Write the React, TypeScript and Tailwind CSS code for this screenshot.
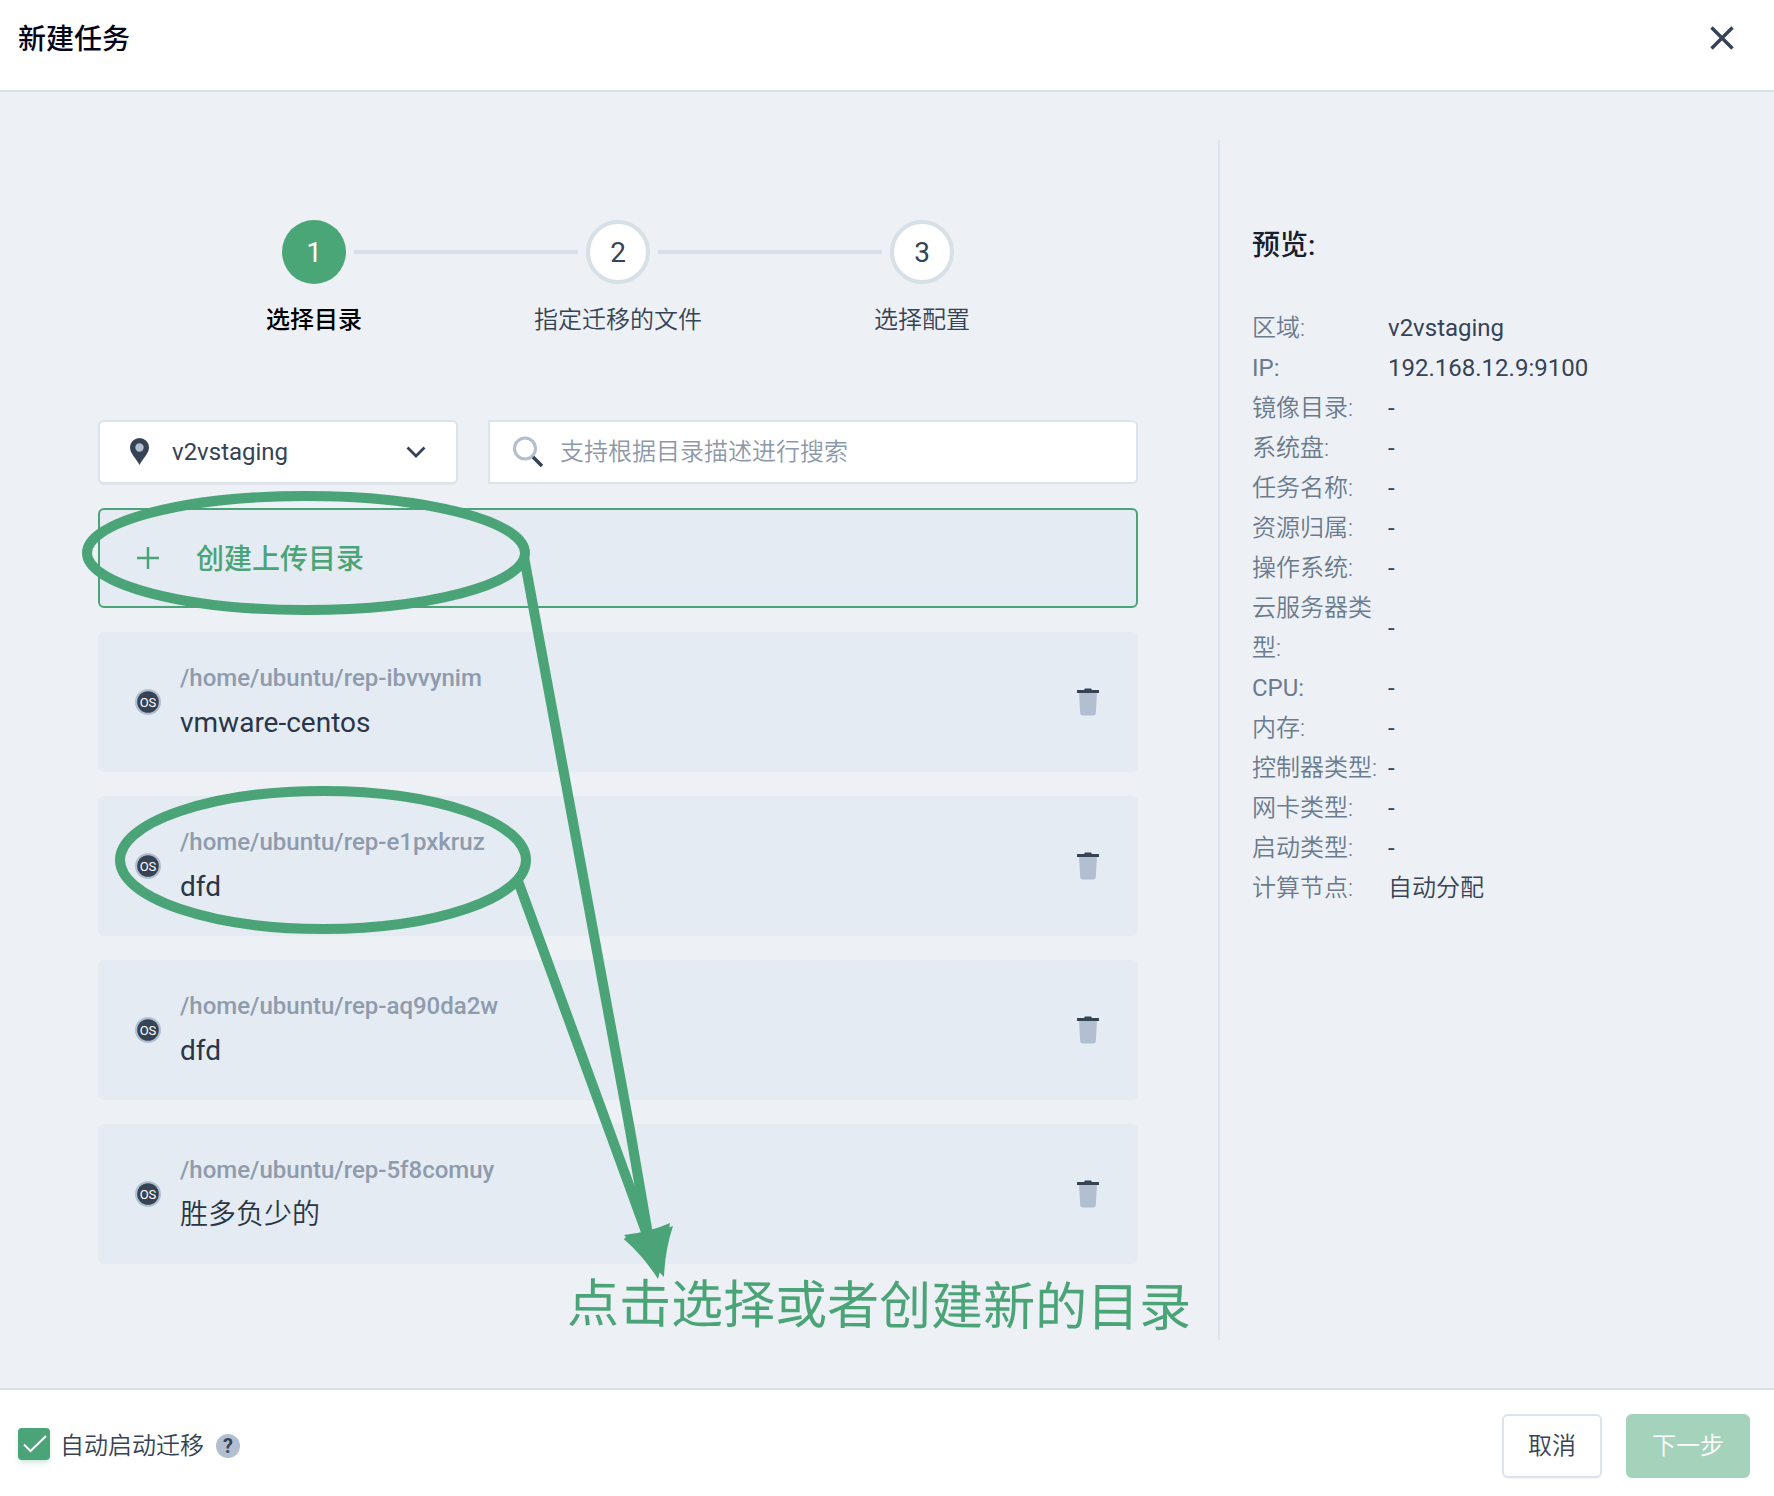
import { useState } from "react";

const steps = ["选择目录", "指定迁移的文件", "选择配置"];

const directories = [
  { path: "/home/ubuntu/rep-ibvvynim", name: "vmware-centos" },
  { path: "/home/ubuntu/rep-e1pxkruz", name: "dfd" },
  { path: "/home/ubuntu/rep-aq90da2w", name: "dfd" },
  { path: "/home/ubuntu/rep-5f8comuy", name: "胜多负少的" },
];

const preview = [
  ["区域:", "v2vstaging"],
  ["IP:", "192.168.12.9:9100"],
  ["镜像目录:", "-"],
  ["系统盘:", "-"],
  ["任务名称:", "-"],
  ["资源归属:", "-"],
  ["操作系统:", "-"],
  ["云服务器类型:", "-"],
  ["CPU:", "-"],
  ["内存:", "-"],
  ["控制器类型:", "-"],
  ["网卡类型:", "-"],
  ["启动类型:", "-"],
  ["计算节点:", "自动分配"],
];

// Chinese glyphs look heavier than Latin ones at the same weight, so they are set a step lighter.
function Balanced({ text }: { text: string }) {
  return <span className={/[\u4e00-\u9fff]/.test(text) ? "font-[350]" : "font-normal"}>{text}</span>;
}

function Stepper() {
  return (
    <ol className="flex justify-center">
      {steps.map((label, i) => (
        <li key={label} className="relative flex w-[304px] flex-col items-center">
          {i > 0 && <span className="absolute top-[30px] right-[192px] h-1 w-[224px] bg-[#d7dfe7]" />}
          <span
            className={
              i === 0
                ? "flex size-16 items-center justify-center rounded-full bg-[#4ba677] pt-0.5 text-[28px] text-white"
                : "flex size-16 items-center justify-center rounded-full border-4 border-[#d7dfe7] bg-white pt-0.5 text-[28px]"
            }
          >
            {i + 1}
          </span>
          <span className={i === 0 ? "mt-4 text-2xl leading-10 font-medium text-black" : "mt-4 text-2xl leading-10 font-[350]"}>
            {label}
          </span>
        </li>
      ))}
    </ol>
  );
}

function OsIcon() {
  return (
    <svg className="size-[26px] shrink-0" viewBox="0 0 26 26" aria-hidden="true">
      <circle cx="13" cy="13" r="13" fill="#b1bfd0" />
      <circle cx="13" cy="13" r="10.8" fill="#364355" />
      <text x="13" y="17.5" textAnchor="middle" fontSize="13" fill="#fff">
        OS
      </text>
    </svg>
  );
}

function TrashIcon() {
  return (
    <svg className="h-7 w-[22px]" viewBox="0 0 22 28" aria-hidden="true">
      <path d="M2 4h18l-1.2 21.2a2.5 2.5 0 0 1-2.5 2.3H5.7a2.5 2.5 0 0 1-2.5-2.3z" fill="#b1bfd0" />
      <path d="M0 2h7l1-1.600h6L15 2h7v3H0z" fill="#364355" />
    </svg>
  );
}

function Annotation() {
  return (
    <div className="pointer-events-none absolute top-0 left-0">
      <svg width="1200" height="1296" viewBox="0 92 1200 1296" fill="none" aria-hidden="true">
        <g stroke="#4ba477" strokeWidth="10">
          <ellipse cx="306" cy="553" rx="219" ry="57" />
          <ellipse cx="323" cy="860" rx="203" ry="69" />
          <path d="M524 557L630 1130L649 1240M518 881L609 1130L649 1240" />
        </g>
        <path d="M624 1239Q652 1234 673 1226Q665 1250 664 1277Q650 1262 624 1239z" fill="#4ba477" />
        <path d="M624 1235Q650 1232 670 1223Q666 1250 658 1279Q644 1257 624 1239L626 1237z" fill="#4ba477" />
      </svg>
      <p className="absolute top-[1177px] left-[567px] rotate-[0.4deg] text-[52px] leading-[76px] whitespace-nowrap text-[#4ba477]">
        点击选择或者创建新的目录
      </p>
    </div>
  );
}

export default function App() {
  const [autoStart, setAutoStart] = useState(true);
  return (
    <div className="flex min-h-screen flex-col bg-[#edf1f6] font-[Roboto,'Noto_Sans_CJK_SC',sans-serif] text-2xl text-[#364355]">
      <header className="flex h-[92px] items-start justify-between border-b-2 border-[#d7dfe7] bg-white pt-[18px] pr-10 pl-[18px]">
        <h1 className="text-[28px] leading-[44px] font-medium text-[#05051a]">新建任务</h1>
        <button type="button" aria-label="关闭" className="flex h-10 items-center">
          <svg className="size-6" viewBox="0 0 24 24" fill="none" stroke="#364355" strokeWidth="3.500" aria-hidden="true">
            <path d="M1.500 1.500l21 21M22.500 1.500l-21 21" />
          </svg>
        </button>
      </header>

      <main className="relative flex flex-1 py-12">
        <section className="flex-1 pt-20 pr-20 pl-[98px]">
          <Stepper />

          <div className="mt-20 flex gap-[30px]">
            <div className="relative w-[360px]">
              <svg className="absolute top-[17px] left-8 h-7 w-[19px]" viewBox="0 0 19 28" aria-hidden="true">
                <path d="M9.500 1A9.500 9.500 0 0 0 0 10.500C0 16 6 21.500 9.500 28C13 21.500 19 16 19 10.500A9.500 9.500 0 0 0 9.500 1z" fill="#364355" />
                <circle cx="9.500" cy="10.500" r="4.200" fill="#b1bfd0" />
              </svg>
              <select
                aria-label="区域"
                className="h-16 w-full appearance-none rounded-md border-2 border-[#dbe4ed] bg-white pl-[72px] shadow-xs"
              >
                <option>v2vstaging</option>
              </select>
              <svg className="pointer-events-none absolute top-[26px] right-8 h-3 w-5" viewBox="0 0 20 12" fill="none" stroke="#364355" strokeWidth="2.800" aria-hidden="true">
                <path d="M1.500 1.500L10 10L18.500 1.500" />
              </svg>
            </div>
            <div className="relative flex-1">
              <svg className="absolute top-4 left-[25px] size-8" viewBox="0 0 32 32" fill="none" aria-hidden="true">
                <circle cx="12" cy="12.500" r="10.500" stroke="#b1bfd0" strokeWidth="3" />
                <path d="M20 21l9 9" stroke="#364355" strokeWidth="3.500" />
              </svg>
              <input
                type="text"
                aria-label="搜索目录"
                placeholder="支持根据目录描述进行搜索"
                className="h-16 w-full rounded-r-md border-2 border-[#dbe4ed] bg-white pl-[70px] font-[350] placeholder:text-[#8d99a9]"
              />
            </div>
          </div>

          <button
            type="button"
            className="mt-6 flex h-[100px] w-full items-center rounded-md border-2 border-[#4ba477] bg-[#e4ebf2] pl-[37px] text-[28px] text-[#4ba477]"
          >
            <svg className="size-[22px]" viewBox="0 0 22 22" stroke="currentColor" strokeWidth="2.500" aria-hidden="true">
              <path d="M11 0v22M0 11h22" />
            </svg>
            <span className="ml-[37px] pt-1 font-medium">创建上传目录</span>
          </button>

          <ul className="mt-6 flex flex-col gap-6">
            {directories.map((d) => (
              <li key={d.path} className="flex h-[140px] items-center rounded-md bg-[#e4ebf2] pr-[39px] pl-[37px]">
                <OsIcon />
                <div className="ml-[19px] flex-1">
                  <p className="leading-10 font-medium text-[#8f9bad]">{d.path}</p>
                  <p className="pt-0.5 text-[28px] leading-[46px] text-[#2a3648]">
                    <Balanced text={d.name} />
                  </p>
                </div>
                <button type="button" aria-label="删除">
                  <TrashIcon />
                </button>
              </li>
            ))}
          </ul>
        </section>

        <aside className="w-[556px] border-l-2 border-[#dbe4ed] pt-[84px] pl-8">
          <h2 className="text-[28px] leading-[44px] font-medium text-[#17202e]">预览:</h2>
          <table className="mt-10">
            <tbody>
              {preview.map(([label, value]) => (
                <tr key={label}>
                  <th scope="row" className="w-[136px] pr-2 text-left leading-10 text-[#6b7a8d]">
                    <Balanced text={label} />
                  </th>
                  <td className="leading-10">
                    <Balanced text={value} />
                  </td>
                </tr>
              ))}
            </tbody>
          </table>
        </aside>

        <Annotation />
      </main>

      <footer className="flex h-[108px] items-center justify-between border-t-2 border-[#d7dfe7] bg-white pt-1.5 pr-6 pl-[18px]">
        <div className="flex items-center">
          <label className="flex items-center gap-[10px]">
            <span className="relative mb-1 flex size-8">
              <input
                type="checkbox"
                checked={autoStart}
                onChange={(e) => setAutoStart(e.target.checked)}
                className="size-8 appearance-none rounded-sm bg-white shadow-md ring-1 shadow-[#4ba477]/20 ring-[#dbe4ed] checked:bg-[#4ba477] checked:ring-0"
              />
              <svg className="pointer-events-none absolute inset-0 size-8" viewBox="0 0 32 32" fill="none" stroke="#fff" strokeWidth="2" aria-hidden="true">
                <path d="M6 16.500L12.500 23L28 8" />
              </svg>
            </span>
            <span className="font-[350]">自动启动迁移</span>
          </label>
          <button type="button" aria-label="帮助" className="ml-3 flex size-6 items-center justify-center rounded-full bg-[#b1bfd0] text-xl font-bold">
            ?
          </button>
        </div>
        <div className="flex gap-6">
          <button type="button" className="h-16 w-[100px] rounded-md border-2 border-[#dbe4ed] bg-white font-[350] shadow-xs">
            取消
          </button>
          <button type="button" className="h-16 w-[124px] rounded-md bg-[#a5d2bb] font-[350] text-white">
            下一步
          </button>
        </div>
      </footer>
    </div>
  );
}
